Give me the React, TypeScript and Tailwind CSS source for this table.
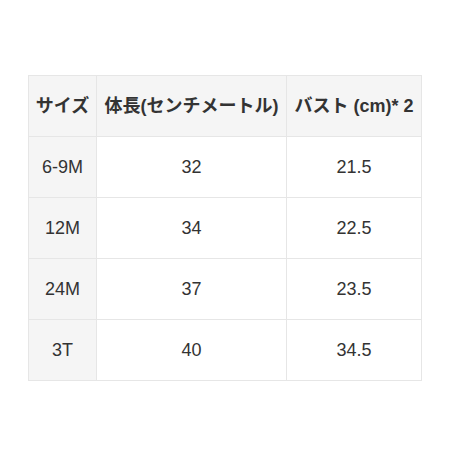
const rows = [
  ["6-9M", "32", "21.5"],
  ["12M", "34", "22.5"],
  ["24M", "37", "23.5"],
  ["3T", "40", "34.5"],
];

export default function App() {
  return (
    <div
      className="flex h-[460px] w-[460px] items-start bg-white pl-[28px] pt-[75px] text-[18px] text-[#333]"
      style={{ fontFamily: '"Liberation Sans", "Noto Sans CJK JP", sans-serif' }}
    >
      <table className="border-collapse">
        <thead>
          <tr className="h-[61px] bg-[#f5f5f5]">
            <th className="w-[68px] border border-[#e6e6e6] px-0 text-center font-bold">サイズ</th>
            <th className="w-[190px] border border-[#e6e6e6] px-0 text-center font-bold">体長(センチメートル)</th>
            <th className="w-[135px] border border-[#e6e6e6] px-0 text-center font-bold">バスト (cm)* 2</th>
          </tr>
        </thead>
        <tbody>
          {rows.map((r) => (
            <tr key={r[0]} className="h-[61px]">
              <td className="border border-[#e6e6e6] bg-[#f5f5f5] text-center">{r[0]}</td>
              <td className="border border-[#e6e6e6] text-center">{r[1]}</td>
              <td className="border border-[#e6e6e6] text-center">{r[2]}</td>
            </tr>
          ))}
        </tbody>
      </table>
    </div>
  );
}
